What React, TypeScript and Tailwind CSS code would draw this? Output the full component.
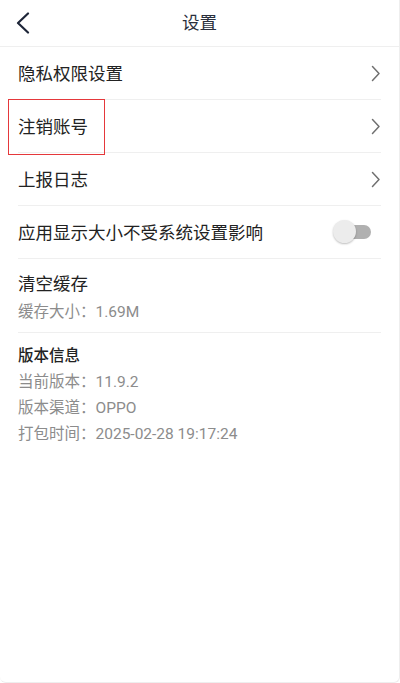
import { ReactNode } from 'react';

const font = { fontFamily: 'Roboto, "Noto Sans CJK SC", "Noto Sans", sans-serif' };

function ChevronRight() {
  return (
    <svg width="10" height="17" viewBox="0 0 10 17" fill="none">
      <path d="M1.5 1.5 L8 8.5 L1.5 15.5" stroke="#707070" strokeWidth="1.5" strokeLinecap="round" strokeLinejoin="round" />
    </svg>
  );
}

function Row({ children, right }: { children: ReactNode; right?: ReactNode }) {
  return (
    <div className="mx-[18px] h-[53px] flex items-center justify-between border-b border-[#efefef]">
      <span className="pt-[3px] text-[17.5px] text-[#222]">{children}</span>
      {right}
    </div>
  );
}

function Toggle() {
  return (
    <div className="relative w-[38px] h-[24px] mr-[10px] flex items-center">
      <div className="ml-[8px] w-[30px] h-[14px] rounded-full bg-[#b0b0b0]" />
      <div className="absolute left-0 top-0 w-[23px] h-[23px] rounded-full bg-[#ececec] shadow-[0_1px_2px_rgba(0,0,0,0.25)]" />
    </div>
  );
}

export default function App() {
  return (
    <div
      className="relative w-[400px] h-[683px] bg-white border-r border-b border-[#eeeeee] rounded-b-md overflow-hidden"
      style={font}
    >
      <div className="relative h-[47px] flex items-center justify-center border-b border-[#efefef]">
        <svg className="absolute left-[15px] top-[12px]" width="16" height="22" viewBox="0 0 16 22" fill="none">
          <path d="M13 1.5 L3 11 L13 20.5" stroke="#1d2538" strokeWidth="2.2" strokeLinecap="round" strokeLinejoin="round" />
        </svg>
        <span className="text-[17.5px] text-[#2a2f3c]">设置</span>
      </div>

      <Row right={<ChevronRight />}>隐私权限设置</Row>
      <Row right={<ChevronRight />}>注销账号</Row>
      <Row right={<ChevronRight />}>上报日志</Row>
      <Row right={<Toggle />}>应用显示大小不受系统设置影响</Row>

      <div className="mx-[18px] h-[74px] flex flex-col border-b border-[#efefef] pt-[12px]">
        <span className="text-[17.5px] leading-[26px] text-[#222]">清空缓存</span>
        <span className="mt-[4px] text-[15.5px] leading-[22px] text-[#8c8c8c]">缓存大小：1.69M</span>
      </div>

      <div className="mx-[18px] pt-[10px] flex flex-col">
        <span className="text-[15.5px] leading-[26px] text-[#222] font-medium">版本信息</span>
        <span className="text-[15.5px] leading-[26px] text-[#8c8c8c]">当前版本：11.9.2</span>
        <span className="text-[15.5px] leading-[26px] text-[#8c8c8c]">版本渠道：OPPO</span>
        <span className="text-[15.5px] leading-[26px] text-[#8c8c8c]">打包时间：2025-02-28 19:17:24</span>
      </div>

      <div className="absolute left-[8px] top-[99px] w-[97px] h-[56px] border-[1.5px] border-[#e5383b]" />
    </div>
  );
}
